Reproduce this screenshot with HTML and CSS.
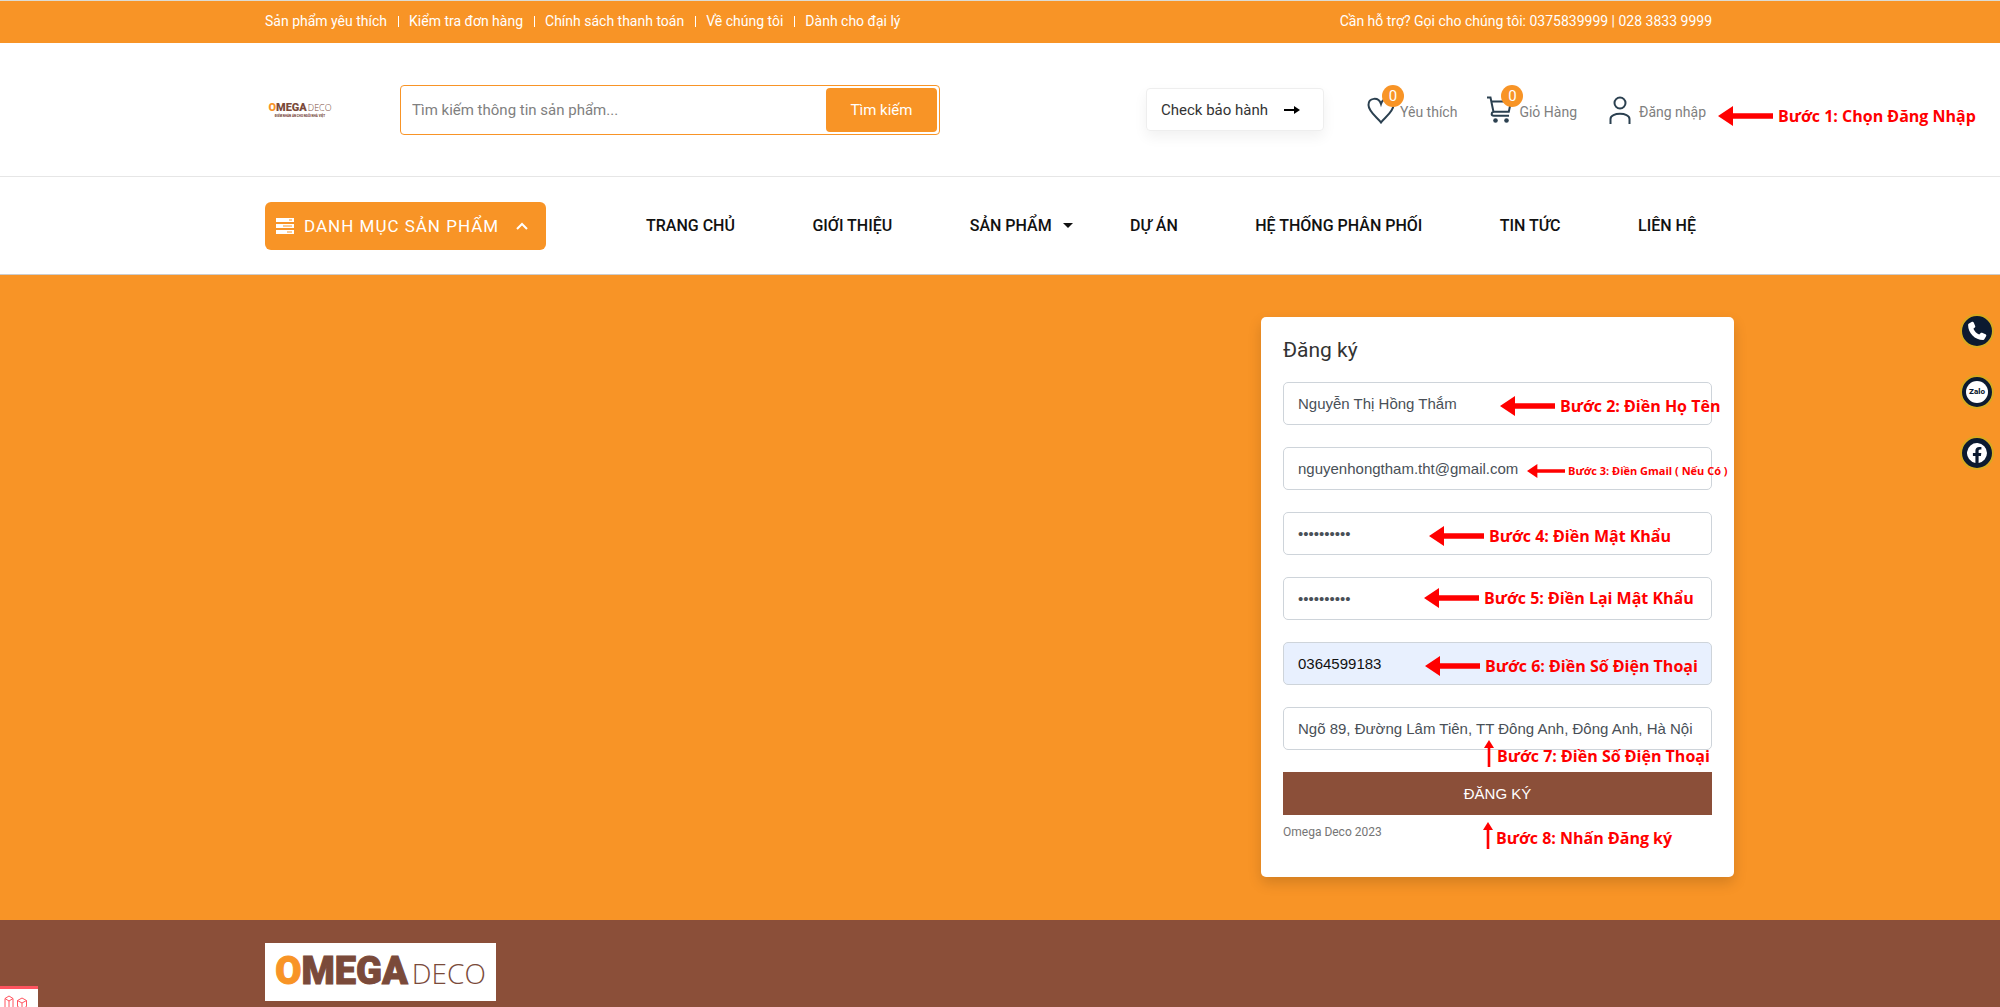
FILE: index.html
```
<!DOCTYPE html>
<html lang="vi">
<head>
<meta charset="utf-8">
<meta name="viewport" content="width=device-width, initial-scale=1">
<title>Đăng ký - Omega Deco</title>
<link rel="stylesheet" href="styles.css">
</head>
<body>
<svg class="defs" aria-hidden="true">
  <symbol id="arrow-left" viewBox="0 0 55 20"><path d="M0 10 15 0v7.300h40v5.400H15V20z"/></symbol>
  <symbol id="arrow-up" viewBox="0 0 10 27"><path d="M5 0l5 8H6.300v19H3.700V8H0z"/></symbol>
</svg>

<div class="topbar">
  <div class="container topbar-row">
    <ul class="top-links">
      <li><a href="#">Sản phẩm yêu thích</a></li>
      <li><a href="#">Kiểm tra đơn hàng</a></li>
      <li><a href="#">Chính sách thanh toán</a></li>
      <li><a href="#">Về chúng tôi</a></li>
      <li><a href="#">Dành cho đại lý</a></li>
    </ul>
    <p class="support">Cần hỗ trợ? Gọi cho chúng tôi: 0375839999 | 028 3833 9999</p>
  </div>
</div>

<header class="header">
  <div class="container header-row">
    <a class="logo" href="#" aria-label="Omega Deco">
      <span class="logo-name"><b><i>O</i>MEGA</b><span>DECO</span></span>
      <span class="logo-tag">ĐIỂM NHẤN ẤN CHO NGÔI NHÀ VIỆT</span>
    </a>
    <form class="search">
      <input type="text" aria-label="Tìm kiếm" placeholder="Tìm kiếm thông tin sản phẩm...">
      <button type="button">Tìm kiếm</button>
    </form>
    <a class="check" href="#">Check bảo hành
      <svg width="16" height="10" viewBox="0 0 16 10"><path d="M0 4h10V1l6 4-6 4V6H0z"/></svg>
    </a>
    <nav class="actions" aria-label="Tài khoản">
      <a href="#">
        <span class="action-icon">
          <svg width="28" height="28" viewBox="0 0 28 28"><path d="M14 26.500C11 22 1.500 16 1.500 9c0-7.500 10-8.500 12.500-1 2.500-7.500 12.500-6.500 12.500 1 0 7-9.500 13-12.500 17.500z"/></svg>
          <span class="badge">0</span>
        </span>
        <span>Yêu thích</span>
      </a>
      <a href="#">
        <span class="action-icon">
          <svg width="28" height="28" viewBox="0 0 28 28"><path d="M1 1.500h3.500L7.500 16M5.500 5.500H25l-2.200 10.200H7.500c-2.500 1-2.500 4 .2 4H23"/><g class="solid"><circle cx="9.500" cy="24.500" r="2.300"/><circle cx="20.500" cy="24.500" r="2.300"/></g></svg>
          <span class="badge">0</span>
        </span>
        <span>Giỏ Hàng</span>
      </a>
      <a href="#">
        <span class="action-icon">
          <svg width="28" height="28" viewBox="0 0 28 28"><circle cx="14" cy="7" r="5.500"/><path d="M4.500 28v-5c0-7 19-7 19 0v5"/></svg>
        </span>
        <span>Đăng nhập</span>
      </a>
      <span class="note note-login"><svg width="55" height="20"><use href="#arrow-left"/></svg>Bước 1: Chọn Đăng Nhập</span>
    </nav>
  </div>
</header>

<div class="navbar">
  <div class="container navbar-row">
    <button class="catalog" type="button">
      <svg width="18" height="16" viewBox="0 0 18 16"><path class="fill" d="M0 0h18v4H0zM0 6h18v4H0zM0 12h18v4H0z"/><path class="slot" d="M13 2h3M7 8h9M11 14h5"/></svg>
      <span>DANH MỤC SẢN PHẨM</span>
      <svg width="12" height="8" viewBox="0 0 12 8"><path class="chevron" d="M1 7l5-5 5 5"/></svg>
    </button>
    <nav class="menu" aria-label="Chính">
      <a href="#">TRANG CHỦ</a>
      <a href="#">GIỚI THIỆU</a>
      <a class="has-sub" href="#">SẢN PHẨM</a>
      <a href="#">DỰ ÁN</a>
      <a href="#">HỆ THỐNG PHÂN PHỐI</a>
      <a href="#">TIN TỨC</a>
      <a href="#">LIÊN HỆ</a>
    </nav>
  </div>
</div>

<main class="main">
  <div class="container">
    <form class="card">
      <h1>Đăng ký</h1>
      <div class="field">
        <input type="text" aria-label="Họ tên" value="Nguyễn Thị Hồng Thắm">
        <span class="note note-name"><svg width="55" height="20"><use href="#arrow-left"/></svg>Bước 2: Điền Họ Tên</span>
      </div>
      <div class="field">
        <input type="email" aria-label="Email" value="nguyenhongtham.tht@gmail.com">
        <span class="note note-mail"><svg width="38" height="14"><use href="#arrow-left"/></svg>Bước 3: Điền Gmail ( Nếu Có )</span>
      </div>
      <div class="field">
        <input type="password" aria-label="Mật khẩu" value="omegadeco1">
        <span class="note note-pass"><svg width="55" height="20"><use href="#arrow-left"/></svg>Bước 4: Điền Mật Khẩu</span>
      </div>
      <div class="field">
        <input type="password" aria-label="Nhập lại mật khẩu" value="omegadeco1">
        <span class="note note-repeat"><svg width="55" height="20"><use href="#arrow-left"/></svg>Bước 5: Điền Lại Mật Khẩu</span>
      </div>
      <div class="field">
        <input class="autofilled" type="tel" aria-label="Số điện thoại" value="0364599183">
        <span class="note note-phone"><svg width="55" height="20"><use href="#arrow-left"/></svg>Bước 6: Điền Số Điện Thoại</span>
      </div>
      <div class="field">
        <input type="text" aria-label="Địa chỉ" value="Ngõ 89, Đường Lâm Tiên, TT Đông Anh, Đông Anh, Hà Nội">
        <span class="note note-address"><svg width="10" height="27"><use href="#arrow-up"/></svg>Bước 7: Điền Số Điện Thoại</span>
      </div>
      <div class="field">
        <button class="submit" type="button">ĐĂNG KÝ</button>
        <span class="note note-submit"><svg width="10" height="27"><use href="#arrow-up"/></svg>Bước 8: Nhấn Đăng ký</span>
      </div>
      <p class="copyright">Omega Deco 2023</p>
    </form>
  </div>
</main>

<footer class="footer">
  <div class="container">
    <a class="footer-logo" href="#" aria-label="Omega Deco"><span class="logo-name"><b><i>O</i>MEGA</b><span>DECO</span></span></a>
  </div>
</footer>

<div class="contacts">
  <a href="#" aria-label="Gọi điện"><svg width="20" height="20" viewBox="0 0 20 20"><path d="M2 2.500 5 .8c.7-.3 1.400 0 1.700.7l1.500 3.400c.2.600.1 1.200-.4 1.600L6.400 7.800c1.200 2.700 3 4.500 5.800 5.800l1.300-1.400c.4-.5 1-.6 1.600-.4l3.400 1.500c.7.3 1 1 .7 1.700l-1.700 3c-.3.600-.8.900-1.400.9C8 18.900 1.100 12 1.100 3.900c0-.600.3-1.100.9-1.400z"/></svg></a>
  <a href="#"><span class="zalo">Zalo</span></a>
  <a href="#" aria-label="Facebook"><svg width="20" height="20" viewBox="0 0 20 20"><path d="M20 10A10 10 0 1 0 8.400 19.900v-7H5.900V10h2.500V7.800c0-2.500 1.500-3.900 3.800-3.900 1.100 0 2.200.2 2.200.2v2.500h-1.200c-1.300 0-1.600.8-1.600 1.500V10h2.700l-.4 2.900h-2.300v7A10 10 0 0 0 20 10z"/></svg></a>
</div>

<button class="debug" type="button" aria-label="Debug">
  <svg width="24" height="20" viewBox="0 0 24 20"><path d="M1 3.500 5 1l4 2.500v14L5 15l-4 2.500zM1 3.500 5 6l4-2.500M5 6v9M13.500 5.500 18 3l4.500 2.500v6L18 14l-4.500-2.500zM13.500 5.500 18 8l4.500-2.500M18 8v6M9 17l4.500-4"/></svg>
</button>
</body>
</html>
```
FILE: styles.css
```
* { box-sizing: border-box; }

body {
  margin: 0;
  min-height: 100vh;
  display: flex;
  flex-direction: column;
  background: #fff;
  color: #333;
  font: 15px/20px Roboto, sans-serif;
}

a { color: inherit; text-decoration: none; }
ul, p, h1 { margin: 0; padding: 0; }
button, input { font: inherit; color: inherit; border: 0; }
.defs { position: absolute; width: 0; height: 0; }

/* Shared horizontal frame */
.topbar, .header, .navbar, .main, .footer { padding-right: 23px; }
.container {
  max-width: 1491px;
  margin: 0 auto;
  padding: 0 22px;
}

/* Top bar */
.topbar {
  background: #f89426;
  border-top: 1px solid #dcdcd4;
  color: #fff;
  font-size: 14px;
}
.topbar-row {
  display: flex;
  justify-content: space-between;
  align-items: center;
  min-height: 42px;
  padding-bottom: 2px;
}
.top-links { display: flex; list-style: none; }
.top-links li { display: flex; align-items: center; }
.top-links li + li::before {
  content: "";
  width: 1px;
  height: 11px;
  margin: 0 10px 0 11px;
  background: #fff;
}

/* Header */
.header { border-bottom: 1px solid #e6e6e6; }
.header-row {
  display: flex;
  align-items: center;
  min-height: 133px;
}
.logo {
  width: 70px;
  margin-right: 65px;
  text-align: center;
}
.logo-name {
  display: flex;
  justify-content: center;
  align-items: baseline;
  gap: 1px;
  color: #7a4a3a;
  font-family: "Open Sans", sans-serif;
  font-size: 9px;
  line-height: 12px;
  font-weight: 300;
}
.logo-name b {
  font-family: Roboto, sans-serif;
  font-size: 11px;
  font-weight: 900;
}
.logo-name i { font-style: normal; color: #f89426; }
.logo-tag {
  display: block;
  color: #7a4a3a;
  font-size: 3px;
  line-height: 4px;
  font-weight: 900;
  white-space: nowrap;
}
.search {
  display: flex;
  width: 540px;
  height: 50px;
  padding: 2px;
  border: 1px solid #f89426;
  border-radius: 4px;
}
.search input {
  flex: 1;
  min-width: 0;
  padding: 0 9px;
  background: none;
}
.search input::placeholder { color: #808080; }
.search button {
  width: 111px;
  border-radius: 4px;
  background: #f89426;
  color: #fff;
}
.check {
  display: flex;
  align-items: center;
  gap: 16px;
  width: 178px;
  height: 43px;
  margin-left: auto;
  padding-left: 14px;
  border: 1px solid #eee;
  border-radius: 4px;
  box-shadow: 0 6px 14px rgba(0, 0, 0, .06);
}
.actions {
  position: relative;
  display: flex;
  gap: 29px;
  margin: 0 6px 0 43px;
  color: #808080;
  font-size: 14px;
}
.actions a { display: flex; align-items: center; gap: 5px; }
.actions a > span:last-child { padding-top: 4px; }
.action-icon { position: relative; display: flex; }
.action-icon svg { fill: none; stroke: #2b4050; stroke-width: 2; }
.action-icon .solid { fill: #2b4050; stroke: none; }
.badge {
  position: absolute;
  top: -11px;
  right: -9px;
  width: 22px;
  height: 22px;
  border-radius: 50%;
  background: #f89426;
  color: #fff;
  font-size: 15px;
  line-height: 22px;
  text-align: center;
}

/* Navigation */
.navbar { border-bottom: 1px solid #ccc; }
.navbar-row {
  display: flex;
  align-items: center;
  min-height: 97px;
}
.catalog {
  display: flex;
  align-items: center;
  gap: 10px;
  width: 281px;
  height: 48px;
  padding: 0 18px 0 11px;
  border-radius: 6px;
  background: #f89426;
  color: #fff;
  font-size: 17px;
  letter-spacing: 1px;
  white-space: nowrap;
}
.catalog svg:last-child { margin-left: auto; }
.catalog .fill { fill: #fff; }
.catalog .slot { stroke: #f89426; }
.catalog .chevron { fill: none; stroke: #fff; stroke-width: 2; }
.menu {
  flex: 1;
  display: flex;
  justify-content: space-between;
  padding: 0 16px 0 100px;
  color: #111;
  font-size: 16px;
  font-weight: 500;
}
.has-sub { display: flex; align-items: center; margin-right: -20px; }
.has-sub::after {
  content: "";
  margin-left: 11px;
  border: 5px solid transparent;
  border-top-color: #111;
  border-bottom: 0;
}

/* Registration form */
.main {
  padding-top: 42px;
  padding-bottom: 43px;
  background: #f89426;
}
.main .container { padding: 0; }
.card {
  width: 473px;
  margin-left: auto;
  padding: 22px 22px 36px;
  border-radius: 5px;
  background: #fff;
  box-shadow: 0 6px 14px rgba(0, 0, 0, .15);
}
.card h1 {
  margin-bottom: 21px;
  font-size: 21px;
  line-height: 22px;
  font-weight: 400;
}
.field { position: relative; margin-bottom: 22px; }
.field input, .submit {
  display: block;
  width: 100%;
  height: 43px;
  padding: 0 14px;
  font-family: "Liberation Sans", sans-serif;
}
.field input {
  border: 1px solid #ced4da;
  border-radius: 5px;
  background: #fff;
  color: #495057;
}
.field input.autofilled { background: #e8f0fe; color: #111; }
.field .submit {
  background: #8b4f39;
  color: #fff;
}
.copyright {
  margin-top: -14px;
  color: #757575;
  font-size: 12px;
  line-height: 18px;
}

/* Step annotations laid over the page */
.note {
  position: absolute;
  display: flex;
  align-items: center;
  gap: 5px;
  color: #f00;
  font: 700 16px/22px "Open Sans", sans-serif;
  white-space: nowrap;
}
.note svg { flex: none; fill: #f00; }
.note-login { left: 351px; top: 9px; }
.note-name { left: 217px; top: 13px; }
.note-mail { left: 244px; top: 13px; gap: 3px; font-size: 11px; }
.note-pass { left: 146px; top: 13px; }
.note-repeat { left: 141px; top: 10px; }
.note-phone { left: 142px; top: 13px; }
.note-address { left: 201px; top: 33px; }
.note-submit { left: 200px; top: 50px; }
.note-address, .note-submit { gap: 3px; align-items: flex-end; }

/* Footer */
.footer {
  flex: 1;
  padding-top: 23px;
  padding-bottom: 6px;
  background: #8b4f39;
}
.footer .container { display: flex; }
.footer-logo {
  display: flex;
  align-items: center;
  justify-content: center;
  width: 231px;
  height: 58px;
  background: #fff;
}
.footer-logo .logo-name { gap: 4px; font-size: 28px; line-height: 48px; }
.footer-logo b { font-size: 38px; -webkit-text-stroke: 1px currentColor; }

/* Floating contact buttons */
.contacts {
  position: fixed;
  top: 314px;
  right: 6px;
  display: grid;
  gap: 27px;
}
.contacts a {
  display: grid;
  place-items: center;
  width: 34px;
  height: 34px;
  border: 2px solid #d9a820;
  border-radius: 50%;
  background: #0b1a30;
}
.contacts svg { fill: #fff; }
.zalo {
  width: 22px;
  height: 22px;
  border-radius: 50%;
  background: #fff;
  color: #0b1a30;
  font-size: 8px;
  line-height: 22px;
  font-weight: 800;
  text-align: center;
}

.debug {
  position: fixed;
  left: 0;
  bottom: 0;
  width: 38px;
  height: 21px;
  padding: 6px 0 0 4px;
  overflow: hidden;
  border-top: 3px solid #ff5560;
  background: #fff;
}
.debug svg { display: block; fill: none; stroke: #ff5560; }
```
